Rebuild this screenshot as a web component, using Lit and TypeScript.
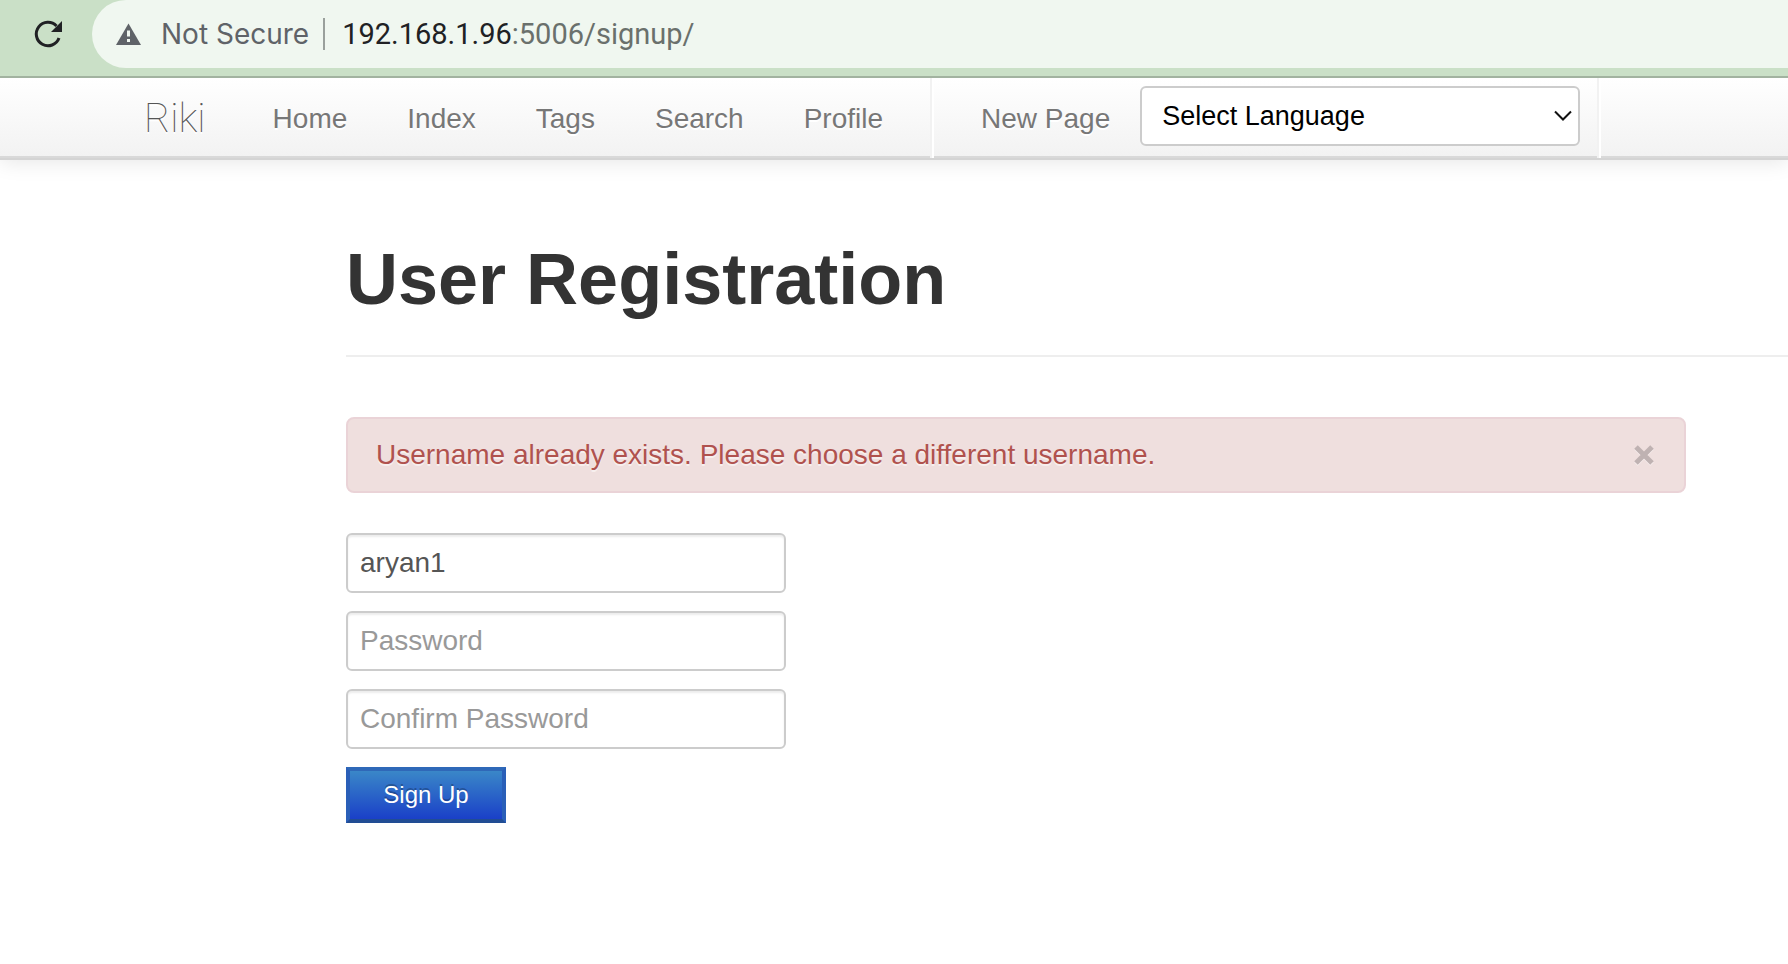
import { LitElement, html, css } from "lit";
import { customElement, state } from "lit/decorators.js";

@customElement("browser-bar")
class BrowserBar extends LitElement {
  static styles = css`
    :host {
      display: block;
      position: relative;
      z-index: 1;
      background: #cae0c7;
      border-bottom: 2px solid #a2b3a0;
      font-family: Inter, Roboto, "Liberation Sans", sans-serif;
      font-size: 28px;
      line-height: 40px;
    }
    .bar {
      display: flex;
      align-items: flex-start;
      padding-bottom: 8px;
    }
    .reload {
      appearance: none;
      display: flex;
      border: 0;
      padding: 14px 26px;
      background: none;
    }
    .address {
      flex: 1;
      box-sizing: border-box;
      display: flex;
      align-items: center;
      height: 68px;
      padding: 0 0 0 24px;
      background: #f0f7f0;
      border-radius: 34px 0 0 34px;
      color: #5f6368;
      white-space: nowrap;
    }
    .warning {
      margin-right: 20px;
    }
    .rule {
      width: 2px;
      height: 32px;
      margin: 0 17px 0 14px;
      background: #9aa09c;
    }
    .url {
      color: #6a706c;
      font-family: Roboto, "Liberation Sans", sans-serif;
      font-size: 29px;
    }
    .host {
      color: #202124;
    }
  `;
  render() {
    return html`
      <div class="bar">
        <button class="reload" aria-label="Reload">
          <svg width="40" height="40" viewBox="0 0 40 40">
            <path d="M33 24A11.7 11.7 0 1 1 30.5 12" fill="none" stroke="#202124" stroke-width="3" />
            <path d="M36 7v11H25z" fill="#202124" />
          </svg>
        </button>
        <div class="address">
          <svg class="warning" width="25" height="24" viewBox="0 0 25 24">
            <path d="M12.5 1.5L25 23H0z" fill="#5f6368" />
            <path d="M11 8.5h3v6h-3zM11 17h3v3h-3z" fill="#f0f7f0" />
          </svg>
          <span>Not Secure</span>
          <span class="rule"></span>
          <span class="url"><span class="host">192.168.1.96</span>:5006/signup/</span>
        </div>
      </div>
    `;
  }
}

@customElement("nav-bar")
class NavBar extends LitElement {
  static styles = css`
    :host {
      display: block;
      font-size: 28px;
      line-height: 40px;
    }
    .nav {
      display: flex;
      align-items: flex-start;
      height: 80px;
      padding-left: 114px;
      border-bottom: 2px solid #d4d4d4;
      background: linear-gradient(#ffffff, #f2f2f2);
      box-shadow: inset 0 -2px 0 #d9d9d9, 0 2px 20px rgba(0, 0, 0, 0.1);
      box-sizing: content-box;
    }
    a {
      padding: 21px 30px 19px;
      color: #777;
      text-decoration: none;
      text-shadow: 0 2px 0 #fff;
      white-space: nowrap;
    }
    .brand {
      padding-right: 37px;
      color: #555;
      font-family: Roboto, Inter, sans-serif;
      font-size: 40px;
      font-weight: 100;
    }
    .divider {
      width: 2px;
      height: 80px;
      margin: 0 17px;
      border-left: 2px solid #f2f2f2;
      background: #fff;
    }
    .language {
      display: grid;
      align-items: center;
      width: 440px;
      margin-top: 8px;
    }
    .language > * {
      grid-area: 1 / 1;
    }
    .language svg {
      justify-self: end;
      margin-right: 8px;
      pointer-events: none;
    }
    select {
      appearance: none;
      box-sizing: border-box;
      width: 100%;
      height: 60px;
      padding: 0 20px;
      border: 2px solid #ccc;
      border-radius: 6px;
      background: #fff;
      color: #000;
      font-family: inherit;
      font-size: 27px;
    }
  `;
  render() {
    return html`
      <nav class="nav">
        <a class="brand" href="#">Riki</a>
        ${["Home", "Index", "Tags", "Search", "Profile"].map((t) => html`<a href="#">${t}</a>`)}
        <span class="divider"></span>
        <a href="#">New Page</a>
        <div class="language">
          <select aria-label="Select Language">
            <option>Select Language</option>
          </select>
          <svg width="18" height="12" viewBox="0 0 18 12">
            <path d="M1 1.5l8 8 8-8" fill="none" stroke="#111" stroke-width="2" />
          </svg>
        </div>
        <span class="divider"></span>
      </nav>
    `;
  }
}

@customElement("app-root")
class AppRoot extends LitElement {
  static styles = css`
    :host {
      display: block;
      min-height: 100vh;
      background: #fff;
      color: #333;
      font-family: "Liberation Sans", Arial, sans-serif;
      font-size: 28px;
      line-height: 40px;
    }
    main {
      padding: 79px 0 40px 346px;
    }
    h1 {
      margin: 0 0 60px;
      padding: 0 0 36px;
      border-bottom: 2px solid #eee;
      font-size: 72px;
      line-height: 80px;
    }
    .alert {
      display: flex;
      align-items: center;
      justify-content: space-between;
      margin: 0 102px 40px 0;
      padding: 16px 28px;
      border: 2px solid #ead3d7;
      border-radius: 8px;
      background: #efdfde;
      color: #b0524e;
      text-shadow: 0 2px 0 rgba(255, 255, 255, 0.5);
    }
    .close {
      appearance: none;
      display: flex;
      padding: 0;
      border: 0;
      background: none;
    }
    form {
      display: flex;
      flex-direction: column;
      align-items: flex-start;
      gap: 18px;
    }
    input {
      box-sizing: border-box;
      width: 440px;
      height: 60px;
      padding: 0 12px;
      border: 2px solid #ccc;
      border-radius: 6px;
      background: #fff;
      box-shadow: inset 0 2px 2px rgba(0, 0, 0, 0.075);
      color: #555;
      font: inherit;
    }
    input::placeholder {
      color: #999;
      opacity: 1;
    }
    .submit {
      width: 160px;
      height: 56px;
      padding: 0;
      border: 4px solid;
      border-color: #2f68b8 #2a5fb8 #214d94;
      background: linear-gradient(#3a87c8, #1a40c8);
      color: #fff;
      font-family: inherit;
      font-size: 24px;
      text-shadow: 0 -2px 0 rgba(0, 0, 0, 0.25);
    }
  `;
  @state() alertOpen = true;

  render() {
    return html`
      <browser-bar></browser-bar>
      <nav-bar></nav-bar>
      <main>
        <h1>User Registration</h1>
        ${this.alertOpen
          ? html`<div class="alert" role="alert">
              <span>Username already exists. Please choose a different username.</span>
              <button class="close" aria-label="Close" @click=${() => (this.alertOpen = false)}>
                <svg width="24" height="24" viewBox="0 0 24 24">
                  <path d="M4 5l16 16M20 5L4 21" stroke="#f7eeee" stroke-width="5" />
                  <path d="M4 4l16 16M20 4L4 20" stroke="#bfb2b2" stroke-width="5" />
                </svg>
              </button>
            </div>`
          : null}
        <form @submit=${(e: Event) => e.preventDefault()}>
          <input type="text" aria-label="Username" .value=${"aryan1"} />
          <input type="password" aria-label="Password" placeholder="Password" />
          <input type="password" aria-label="Confirm Password" placeholder="Confirm Password" />
          <button class="submit" type="submit">Sign Up</button>
        </form>
      </main>
    `;
  }
}
